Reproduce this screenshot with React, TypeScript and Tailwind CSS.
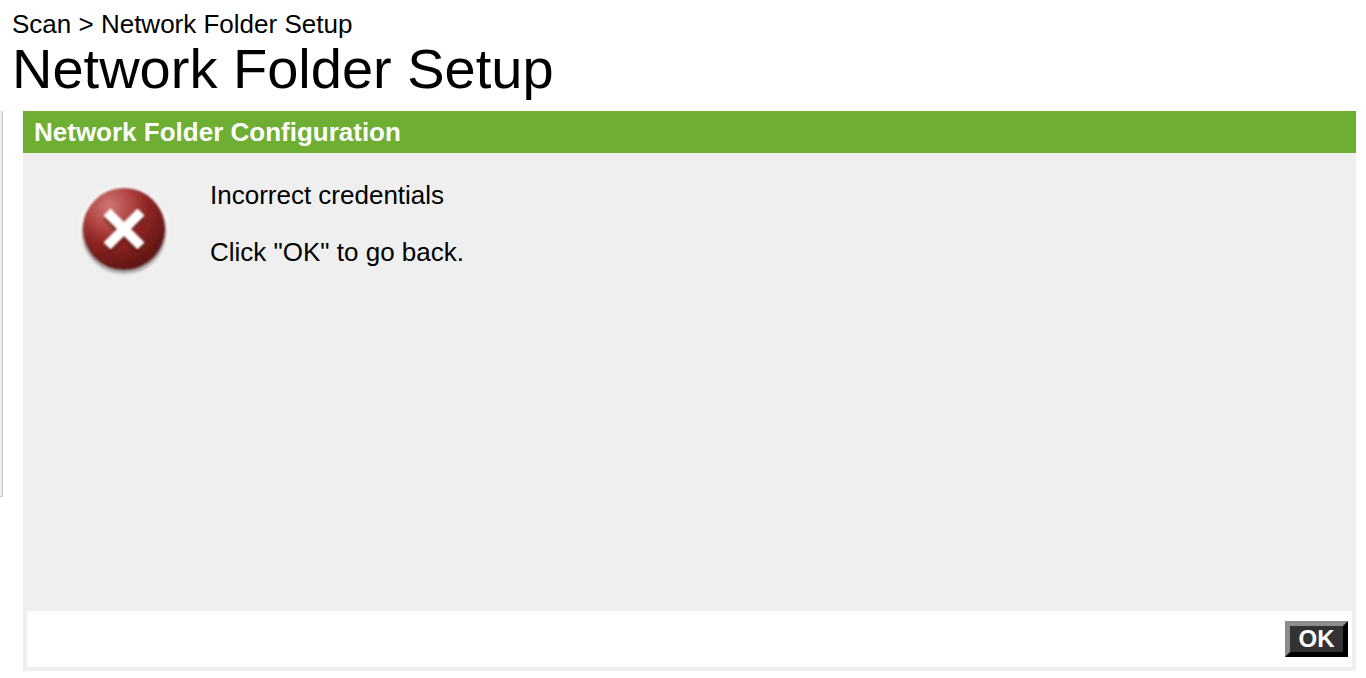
import React from 'react'

function ErrorIcon() {
  return (
    <svg width="96" height="96" viewBox="0 0 96 96">
      <defs>
        <radialGradient id="halo" cx="50%" cy="50%" r="50%">
          <stop offset="78%" stopColor="#ffffff" stopOpacity="1" />
          <stop offset="100%" stopColor="#ffffff" stopOpacity="0" />
        </radialGradient>
        <radialGradient id="ball" cx="32%" cy="22%" r="80%">
          <stop offset="0%" stopColor="#cf7673" />
          <stop offset="35%" stopColor="#b04442" />
          <stop offset="58%" stopColor="#8e2523" />
          <stop offset="100%" stopColor="#5f1513" />
        </radialGradient>
        <filter id="soft">
          <feGaussianBlur stdDeviation="0.8" />
        </filter>
        <filter id="softer">
          <feGaussianBlur stdDeviation="1.6" />
        </filter>
      </defs>
      <circle cx="48" cy="47" r="47" fill="url(#halo)" />
      <ellipse cx="48" cy="50" rx="42" ry="41" fill="#777777" opacity="0.6" filter="url(#softer)" />
      <circle cx="48" cy="46" r="41" fill="url(#ball)" filter="url(#soft)" />
      <path d="M31 30 L65 64 M65 30 L31 64" stroke="#4a1210" strokeWidth="11" opacity="0.55" transform="translate(0 2)" filter="url(#softer)" />
      <path d="M31 29 L65 63 M65 29 L31 63" stroke="#ffffff" strokeWidth="10" filter="url(#soft)" />
    </svg>
  )
}

export default function App() {
  return (
    <div className="h-[678px] w-[1366px] overflow-hidden bg-white text-black font-['Liberation_Sans',Arial,sans-serif]">
      <div className="h-[111px] pl-3 pt-[10px]">
        <div className="text-[26px] leading-[28px]">Scan &gt; Network Folder Setup</div>
        <h1 className="text-[56px] leading-[62px] font-normal">Network Folder Setup</h1>
      </div>

      <div className="flex">
        {/* clipped side nav, only its edge shows */}
        <div className="h-[386px] w-[3px] shrink-0 border-r border-b border-[#c8c8c8] bg-[#efefef]" />

        <div className="ml-5 flex h-[560px] w-[1333px] flex-col bg-[#efefef]">
          <div className="flex h-[42px] items-center bg-[#6dae33] pl-[11px] text-[26px] font-bold text-white">
            Network Folder Configuration
          </div>

          <div className="flex flex-1">
            <div className="w-[187px] pl-[53px] pt-[30px]">
              <ErrorIcon />
            </div>
            <div className="pt-[27px] text-[26px] leading-[30px]">
              <p>Incorrect credentials</p>
              <p className="mt-[27px]">Click "OK" to go back.</p>
            </div>
          </div>

          <div className="mx-1 mb-1 flex h-[56px] items-center justify-end bg-white pr-1">
            <button className="flex h-9 w-[63px] items-center justify-center border-[5px] border-t-[#8c8c8c] border-l-[#8c8c8c] border-r-black border-b-black bg-[#333333] text-[24px] font-bold text-white">
              OK
            </button>
          </div>
        </div>
      </div>
    </div>
  )
}
